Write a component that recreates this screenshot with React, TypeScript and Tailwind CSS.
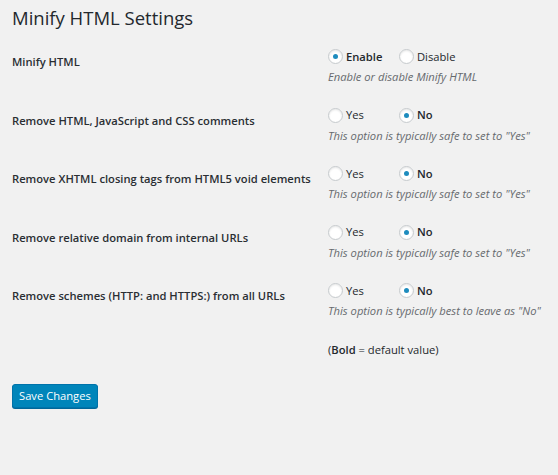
import React from "react";

type Row = {
  label: string;
  options: { text: string; checked: boolean }[];
  note: string;
};

const rows: Row[] = [
  {
    label: "Minify HTML",
    options: [
      { text: "Enable", checked: true },
      { text: "Disable", checked: false },
    ],
    note: "Enable or disable Minify HTML",
  },
  {
    label: "Remove HTML, JavaScript and CSS comments",
    options: [
      { text: "Yes", checked: false },
      { text: "No", checked: true },
    ],
    note: 'This option is typically safe to set to "Yes"',
  },
  {
    label: "Remove XHTML closing tags from HTML5 void elements",
    options: [
      { text: "Yes", checked: false },
      { text: "No", checked: true },
    ],
    note: 'This option is typically safe to set to "Yes"',
  },
  {
    label: "Remove relative domain from internal URLs",
    options: [
      { text: "Yes", checked: false },
      { text: "No", checked: true },
    ],
    note: 'This option is typically safe to set to "Yes"',
  },
  {
    label: "Remove schemes (HTTP: and HTTPS:) from all URLs",
    options: [
      { text: "Yes", checked: false },
      { text: "No", checked: true },
    ],
    note: 'This option is typically best to leave as "No"',
  },
];

function Radio({ checked }: { checked: boolean }) {
  return (
    <span className="mr-[3px] flex size-[15px] shrink-0 items-center justify-center rounded-full border border-[#c6cacd] bg-white shadow-[inset_0_1px_2px_rgba(0,0,0,0.1)]">
      {checked && <span className="size-[5px] rounded-full bg-[#1e8cbe]" />}
    </span>
  );
}

export default function App() {
  return (
    <div className="min-h-[475px] bg-[#f1f1f1] px-3 font-['Open_Sans',sans-serif] text-[#23282d]">
      <h1 className="pt-[5px] text-[18.5px] leading-[26px] font-normal">
        Minify HTML Settings
      </h1>
      <div className="mt-[7px]">
        {rows.map((row) => (
          <div key={row.label} className="grid h-[58.5px] grid-cols-[316px_1fr]">
            <div className="pt-[15px] text-[11.2px] leading-[18px] font-semibold text-[#2a2e33]">
              {row.label}
            </div>
            <div className="pt-[10px]">
              <div className="flex h-[18px] items-center text-[11.2px]">
                <label className="flex w-[71px] items-center">
                  <Radio checked={row.options[0].checked} />
                  <span className={row.options[0].checked ? "font-semibold" : ""}>
                    {row.options[0].text}
                  </span>
                </label>
                <label className="flex items-center">
                  <Radio checked={row.options[1].checked} />
                  <span className={row.options[1].checked ? "font-semibold" : ""}>
                    {row.options[1].text}
                  </span>
                </label>
              </div>
              <p className="mt-[2px] text-[11.2px] leading-[18px] text-[#666a6e] italic">
                {row.note}
              </p>
            </div>
          </div>
        ))}
        <div className="grid h-[58.5px] grid-cols-[316px_1fr]">
          <div />
          <div className="pt-[10px] text-[11.2px] leading-[18px]">
            (<span className="font-semibold">Bold</span> = default value)
          </div>
        </div>
      </div>
      <div className="mt-[-5px] flex">
        <button className="h-[24px] rounded-[3px] border border-[#0073aa] bg-[#0085ba] px-[6px] text-[11.2px] leading-[20px] text-white shadow-[0_1px_0_#006799]">
          Save Changes
        </button>
      </div>
    </div>
  );
}
